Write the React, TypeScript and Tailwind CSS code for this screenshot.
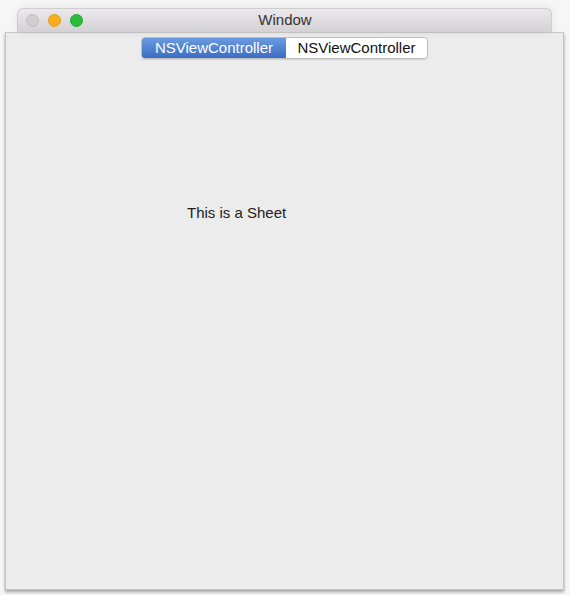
// Window with a sheet attached below its title bar

export default function App() {
    return (
        <div className="w-[570px] h-[595px] bg-[#f6f6f6] overflow-hidden font-['Liberation_Sans',Arial,sans-serif]">
            <div className="ml-[17px] mt-[8px] w-[535px] h-[24px] rounded-t-[6px] bg-gradient-to-b from-[#ebe9eb] to-[#d3d1d3] border border-b-0 border-[#cfcdcf] flex items-center relative shadow-[0_0_8px_rgba(0,0,0,0.08)]">
                <div className="flex items-center gap-[9px] pl-[8px]">
                    <span className="w-[13px] h-[13px] rounded-full bg-[#d0ced0] border border-[#bdbbbd]" />
                    <span className="w-[13px] h-[13px] rounded-full bg-[#f6b01f] border border-[#e09e1b]" />
                    <span className="w-[13px] h-[13px] rounded-full bg-[#2bbb3d] border border-[#22a632]" />
                </div>
                <div className="absolute inset-0 flex items-center justify-center text-[15px] text-[#333] pl-[1px]">
                    Window
                </div>
            </div>
            <div className="ml-[5px] w-[559px] h-[558px] bg-[#ececec] border border-t-0 border-[#c4c4c4] shadow-[0_2px_3px_rgba(0,0,0,0.35)] flex flex-col">
                <div className="h-[1px] bg-[#c9c7c9]" />
                <div className="flex justify-center mt-[4px]">
                    <div className="flex h-[22px] rounded-[4px] border border-[#bdbdbd] overflow-hidden text-[15px] shadow-[0_1px_1px_rgba(0,0,0,0.12)]">
                        <button
                            type="button"
                            className="w-[144px] bg-gradient-to-b from-[#6a9ae0] to-[#3b6dc3] text-white flex items-center justify-center"
                        >
                            NSViewController
                        </button>
                        <button
                            type="button"
                            className="w-[141px] bg-white text-[#111] flex items-center justify-center"
                        >
                            NSViewController
                        </button>
                    </div>
                </div>
                <p className="ml-[181px] mt-[143px] text-[15px] text-[#222]">This is a Sheet</p>
            </div>
        </div>
    );
}
